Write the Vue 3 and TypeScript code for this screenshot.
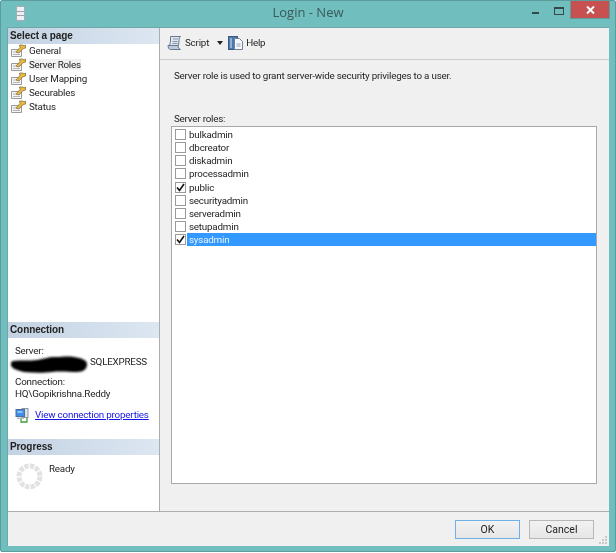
<script setup lang="ts">
const pages = ['General', 'Server Roles', 'User Mapping', 'Securables', 'Status']
const roles = [
  { name: 'bulkadmin', on: false },
  { name: 'dbcreator', on: false },
  { name: 'diskadmin', on: false },
  { name: 'processadmin', on: false },
  { name: 'public', on: true },
  { name: 'securityadmin', on: false },
  { name: 'serveradmin', on: false },
  { name: 'setupadmin', on: false },
  { name: 'sysadmin', on: true },
]
</script>

<template>
  <div class="window">
    <header class="titlebar">
      <svg class="appicon" width="10" height="15" viewBox="0 0 10 15">
        <rect x="0.5" y="0.5" width="8" height="14" fill="#eef1f3" stroke="#a3adb4" />
        <path d="M1 5.500h7M1 9.500h7" stroke="#98a3ac" />
      </svg>
      <div class="title">Login - New</div>
      <div class="controls">
        <span class="min"></span>
        <span class="max"></span>
        <span class="close">
          <svg width="9" height="8" viewBox="0 0 9 8"><path d="M1 .5l7 7M8 .5l-7 7" stroke="#fff" stroke-width="2" /></svg>
        </span>
      </div>
    </header>
    <div class="client">
      <div class="main">
        <aside class="side">
          <section class="pages">
            <h3 class="head">Select a page</h3>
            <ul class="pagelist">
              <li v-for="p in pages" :key="p" class="page">
                <svg class="wrench" width="15" height="13" viewBox="0 0 15 13">
                  <path d="M.5 5.500h10v7H.5z" fill="#f6f6f6" stroke="#9a9a9a" />
                  <path d="M2 8h7M2 10.500h7" stroke="#b4b4b4" />
                  <path d="M5 8l4-4.500L8.500 1H12l1 1 1.500-1v3l-3 1-3.500 4z" fill="#e8b83f" stroke="#7d6a3a" stroke-width=".7" />
                </svg>
                <span :class="{ sel: p === 'Server Roles' }">{{ p }}</span>
              </li>
            </ul>
          </section>
          <section class="conn">
            <h3 class="head">Connection</h3>
            <div class="conninfo">
              <div class="lbl">Server:</div>
              <div class="server">
                <svg class="blot" width="80" height="19" viewBox="0 0 80 19">
                  <path d="M3 6c8-1 16 0 24-1 8-1 10-3 18-3s12-1 19 0 13 3 13 7-2 8-10 8-17-1-25 0-18 1-28 0C6 15 1 13 1 10s0-3 2-4z" fill="#000" />
                </svg>
                <span class="sqlname">SQLEXPRESS</span>
              </div>
              <div class="lbl c2">Connection:</div>
              <div class="lbl">HQ\Gopikrishna.Reddy</div>
              <div class="linkrow">
                <svg width="15" height="15" viewBox="0 0 15 15">
                  <rect x="7" y="0.5" width="6" height="9" fill="#dfe3e8" stroke="#8b96a3" />
                  <rect x="1" y="1.500" width="8.500" height="7" fill="#3f8fe6" stroke="#4d6f9e" />
                  <path d="M2.500 3h5v2h-5z" fill="#8ec3f5" />
                  <path d="M2 9.500h7v1.500H2z" fill="#aeb9c5" />
                  <path d="M6 11v3h6v-4" fill="none" stroke="#3e9f3a" stroke-width="1.300" />
                </svg>
                <a class="link">View connection properties</a>
              </div>
            </div>
          </section>
          <section class="progress">
            <h3 class="head">Progress</h3>
            <div class="proginfo">
              <svg width="27" height="27" viewBox="0 0 27 27">
                <circle cx="13.500" cy="13.500" r="10.500" fill="none" stroke="#e2e2e2" stroke-width="5" stroke-dasharray="4.300 1.200" />
              </svg>
              <span>Ready</span>
            </div>
          </section>
        </aside>
        <main class="content">
          <div class="toolbar">
            <span class="tool">
              <svg width="16" height="16" viewBox="0 0 16 16">
                <path d="M3.500 1.500h10c-1 1-1.500 2-1.500 4l-.5 5H2.500c.8-2 1-4 1-5.500s0-2.500 0-3.500z" fill="#dfe6ee" stroke="#66788f" />
                <path d="M1 10.500h10c0 2 1 3 2.500 4h-10c-1.500 0-2.500-2-2.500-4z" fill="#bccadb" stroke="#66788f" />
                <path d="M6 4h5M5.500 6.500h5M5.500 8.500h5" stroke="#8495ad" />
              </svg>
              <span>Script</span>
            </span>
            <span class="caret"></span>
            <span class="tool">
              <svg width="16" height="16" viewBox="0 0 16 16">
                <rect x="0.5" y="1.500" width="9" height="13" fill="#4d77ad" stroke="#3a5880" />
                <path d="M2 3h2v10H2z" fill="#8fb0d8" />
                <path d="M6.500 3.500h5l3 3v8h-8z" fill="#f6f8fb" stroke="#6f8098" />
                <path d="M8.500 9h4M8.500 11h4" stroke="#8fa3bd" />
              </svg>
              <span>Help</span>
            </span>
          </div>
          <div class="body">
            <p class="desc">Server role is used to grant server-wide security privileges to a user.</p>
            <div class="rolelabel">Server roles:</div>
            <div class="listbox">
              <div v-for="r in roles" :key="r.name" class="role">
                <span class="check">
                  <svg v-if="r.on" width="9" height="9" viewBox="0 0 9 9">
                    <path d="M1 4.500l2.500 3L8 1" fill="none" stroke="#111" stroke-width="1.600" />
                  </svg>
                </span>
                <span class="rname" :class="{ active: r.name === 'sysadmin' }">{{ r.name }}</span>
              </div>
            </div>
          </div>
        </main>
      </div>
      <footer class="footer">
        <button class="btn default">OK</button>
        <button class="btn">Cancel</button>
        <svg class="grip" width="10" height="10" viewBox="0 0 10 10">
          <path d="M7 1h2v2H7zM4 4h2v2H4zM7 4h2v2H7zM1 7h2v2H1zM4 7h2v2H4zM7 7h2v2H7z" fill="#c8c8c8" />
        </svg>
      </footer>
    </div>
  </div>
</template>

<style>
html, body { margin: 0; padding: 0; background: #fff; }
</style>

<style scoped>
.window {
  width: 616px;
  height: 552px;
  box-sizing: border-box;
  background: #70bebe;
  border: 1px solid #5c9c9c;
  border-radius: 2px;
  padding: 0 6px 5px 6px;
  display: flex;
  flex-direction: column;
  font-family: Roboto, "Liberation Sans", Arial, sans-serif;
  font-size: 9.800px;
  letter-spacing: -0.200px;
  color: #1e1e1e;
  overflow: hidden;
  filter: blur(0.300px);
}
.titlebar {
  height: 26px;
  flex: none;
  display: flex;
  align-items: center;
  position: relative;
}
.appicon { margin: 0 0 2px 9px; }
.title {
  position: absolute;
  left: 0;
  right: 0;
  top: 1px;
  text-align: center;
  font-family: "Open Sans", "Liberation Sans", sans-serif;
  font-size: 13px;
  letter-spacing: 0;
  line-height: 20px;
  color: #3a5a5c;
}
.controls {
  margin-left: auto;
  margin-right: -1px;
  display: flex;
  align-items: flex-start;
  align-self: flex-start;
}
.min { width: 7px; height: 2px; background: #2f4a4a; margin: 11px 15px 0 0; }
.max { width: 8px; height: 5px; border: 1px solid #37474a; border-top-width: 2px; margin: 6px 6px 0 0; }
.close {
  width: 38px;
  height: 17px;
  background: #c75050;
  border: 1px solid #5c9c9c;
  border-top: 0;
  display: flex;
  align-items: center;
  justify-content: center;
}
.client {
  flex: 1;
  min-height: 0;
  background: #f0f0f0;
  display: flex;
  flex-direction: column;
  border: 1px solid #6fa8a8;
  border-width: 1px 0 0 1px;
}
.main { flex: 1; min-height: 0; display: flex; border-bottom: 1px solid #adadad; }
.side {
  width: 151px;
  flex: none;
  background: #fff;
  border-right: 1px solid #adadad;
  display: flex;
  flex-direction: column;
}
.head {
  margin: 0;
  height: 16px;
  line-height: 16px;
  padding-left: 2px;
  font-family: "Liberation Sans", Arial, sans-serif;
  font-size: 10px;
  letter-spacing: -0.100px;
  font-weight: bold;
  color: #222;
  background: linear-gradient(90deg, #c3d2e2, #dde7f2);
}
.pages { flex: 1; min-height: 0; }
.pagelist { list-style: none; margin: -1px 0 0; padding: 0; }
.page { height: 14px; display: flex; align-items: center; padding-left: 3px; gap: 3px; white-space: nowrap; }
.sel { background: #f0f0f0; }
.conn { height: 117px; flex: none; }
.conninfo { padding: 7px 0 0 7px; line-height: 12px; }
.server { position: relative; height: 12px; padding-left: 75px; margin-top: -1px; }
.blot {
  position: absolute;
  left: -5px;
  top: -1px;
  filter: blur(1px);
}
.c2 { margin-top: 8px; }
.linkrow { display: flex; gap: 5px; align-items: flex-start; margin-top: 8px; white-space: nowrap; }
.link { color: #1414e6; text-decoration: underline; margin-top: 1px; }
.progress { height: 72px; flex: none; }
.proginfo { display: flex; gap: 6px; padding: 8px 0 0 8px; }
.proginfo span { line-height: 12px; margin-top: 0; }
.content { flex: 1; min-width: 0; display: flex; flex-direction: column; }
.toolbar {
  height: 32px;
  flex: none;
  display: flex;
  align-items: center;
  padding: 0 0 2px 7px;
  border-bottom: 1px solid #cdcdcd;
  box-sizing: border-box;
}
.tool { display: inline-flex; align-items: center; gap: 2px; }
.caret {
  width: 0;
  height: 0;
  border: 3.500px solid transparent;
  border-top: 4px solid #222;
  border-bottom: 0;
  margin: 0 5px 0 8px;
}
.body { flex: 1; min-height: 0; padding: 10px 12px 27px 11px; display: flex; flex-direction: column; }
.desc { margin: 0 0 0 3px; line-height: 12px; }
.rolelabel { margin: 31px 0 0 3px; line-height: 12px; }
.listbox {
  flex: 1;
  min-height: 0;
  margin-top: 1px;
  background: #fff;
  border: 1px solid #a8a8a8;
  padding: 1px 0 0 3px;
}
.role { height: 13.150px; display: flex; align-items: center; gap: 1px; }
.check {
  width: 9px;
  height: 9px;
  flex: none;
  background: #fff;
  border: 1px solid #9a9a9a;
  display: flex;
  align-items: center;
  justify-content: center;
}
.rname { flex: 1; line-height: 13px; padding-left: 2px; }
.rname.active { background: #3399ff; color: #e8f3ff; }
.footer {
  height: 34px;
  flex: none;
  display: flex;
  justify-content: flex-end;
  align-items: flex-start;
  gap: 9px;
  padding: 8px 15px 0 0;
  box-sizing: border-box;
  position: relative;
}
.btn {
  width: 65px;
  height: 19px;
  padding: 0;
  box-sizing: border-box;
  background: linear-gradient(#f2f2f2, #e6e6e6);
  border: 1px solid #b8b8b8;
  font-family: inherit;
  font-size: 10.500px;
  color: #222;
}
.btn.default { border-color: #6db0ea; }
.grip { position: absolute; right: 1px; bottom: 1px; }
</style>
